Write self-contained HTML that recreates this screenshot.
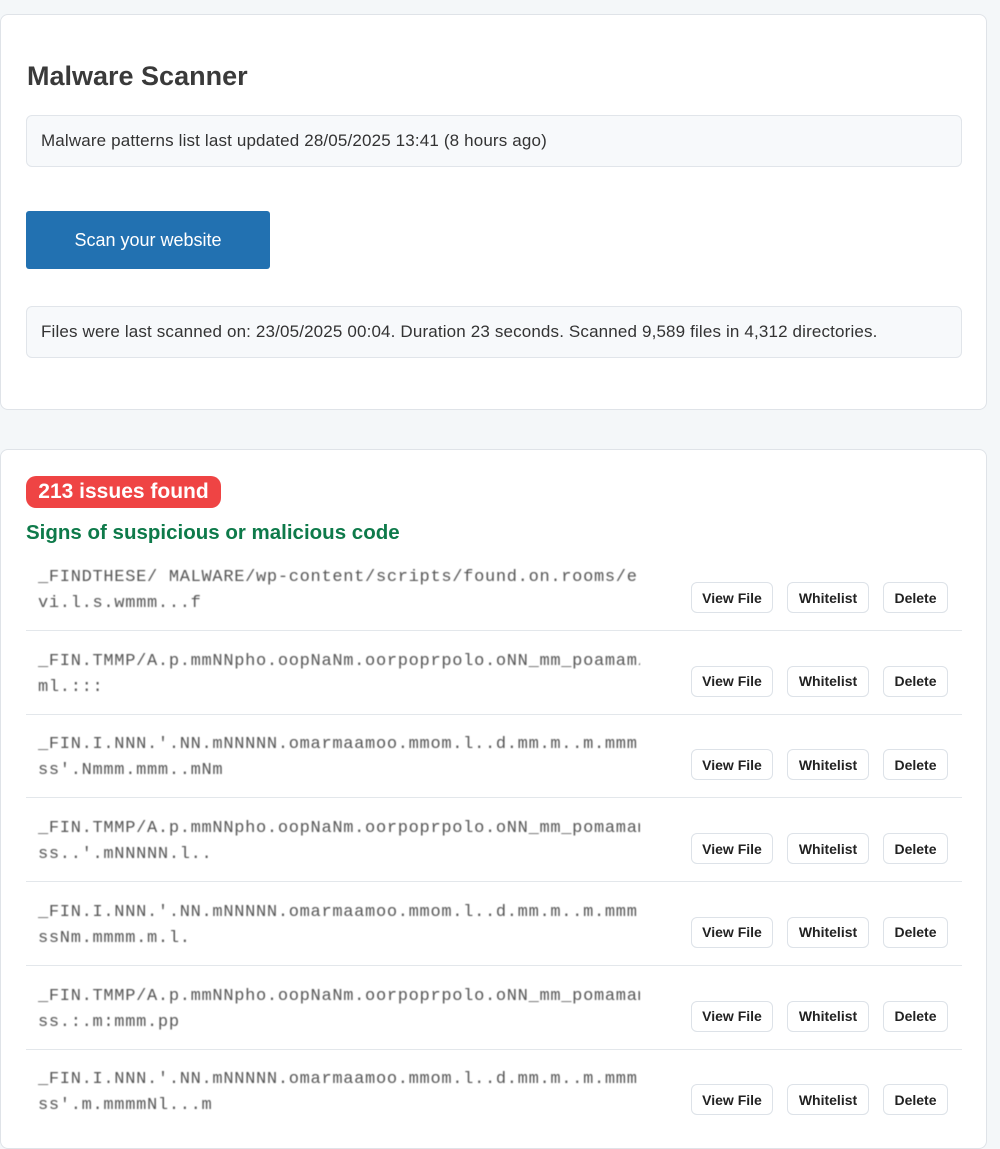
<!DOCTYPE html>
<html><head><meta charset="utf-8"><style>
body{margin:0;width:1000px;height:1114px;background:#f4f7f9;font-family:"Liberation Sans",sans-serif;position:relative;overflow:hidden}
.card{position:absolute;left:0;width:987px;background:#fff;border:1px solid #dfe3e8;border-radius:8px;box-sizing:border-box}
.box{position:absolute;left:26px;width:936px;background:#f7f9fb;border:1px solid #e1e5ea;border-radius:6px;box-sizing:border-box;font-size:17px;letter-spacing:0.15px;color:#333;padding-left:14px;display:flex;align-items:center}
.abs{position:absolute}
.code{position:absolute;left:38px;font-family:"Liberation Mono",monospace;font-size:17px;letter-spacing:0.7px;color:#555;line-height:26px;width:602px;overflow:hidden;white-space:nowrap;filter:blur(0.6px)}
.btn{position:absolute;height:31px;border:1px solid #dde2e8;border-radius:6px;background:#fff;font-size:14px;font-weight:bold;color:#222;display:flex;align-items:center;justify-content:center;box-sizing:border-box}
.div{position:absolute;left:26px;width:936px;height:1px;background:#e3e7eb}
</style></head><body>
<div class="card" style="top:14px;height:396px"></div>
<div class="abs" style="left:27px;top:61px;font-size:27px;font-weight:bold;color:#3a3a3a">Malware Scanner</div>
<div class="box" style="top:115px;height:52px">Malware patterns list last updated 28/05/2025 13:41 (8 hours ago)</div>
<div class="abs" style="left:26px;top:211px;width:244px;height:58px;background:#2271b1;border-radius:3px;color:#fff;font-size:18px;display:flex;align-items:center;justify-content:center">Scan your website</div>
<div class="box" style="top:306px;height:52px">Files were last scanned on: 23/05/2025 00:04. Duration 23 seconds. Scanned 9,589 files in 4,312 directories.</div>
<div class="card" style="top:449px;height:700px"></div>
<div class="abs" style="left:26px;top:476px;width:195px;height:32px;background:#ef4444;border-radius:10px;color:#fff;font-size:21px;font-weight:bold;display:flex;align-items:center;justify-content:center">213 issues found</div>
<div class="abs" style="left:26px;top:521px;font-size:20.5px;font-weight:bold;color:#0e7a4a">Signs of suspicious or malicious code</div>
<div id="rows"></div>
<script>
var t=[["_FINDTHESE/ MALWARE/wp-content/scripts/found.on.rooms/e","vi.l.s.wmmm...f"],
["_FIN.TMMP/A.p.mmNNpho.oopNaNm.oorpoprpolo.oNN_mm_poamam/m","ml.:::"],
["_FIN.I.NNN.'.NN.mNNNNN.omarmaamoo.mmom.l..d.mm.m..m.mmm","ss'.Nmmm.mmm..mNm"],
["_FIN.TMMP/A.p.mmNNpho.oopNaNm.oorpoprpolo.oNN_mm_pomamam","ss..'.mNNNNN.l.."],
["_FIN.I.NNN.'.NN.mNNNNN.omarmaamoo.mmom.l..d.mm.m..m.mmm","ssNm.mmmm.m.l."],
["_FIN.TMMP/A.p.mmNNpho.oopNaNm.oorpoprpolo.oNN_mm_pomamam","ss.:.m:mmm.pp"],
["_FIN.I.NNN.'.NN.mNNNNN.omarmaamoo.mmom.l..d.mm.m..m.mmm","ss'.m.mmmmNl...m"]];
var h="";
for(var i=0;i<7;i++){var y=565+i*83.7;
h+='<div class="code" style="top:'+y+'px">'+t[i][0]+'<br>'+t[i][1]+'</div>';
var b=y+17;
h+='<div class="btn" style="left:691px;width:82px;top:'+b+'px">View File</div>';
h+='<div class="btn" style="left:787px;width:82px;top:'+b+'px">Whitelist</div>';
h+='<div class="btn" style="left:883px;width:65px;top:'+b+'px">Delete</div>';
if(i<6)h+='<div class="div" style="top:'+(630+i*83.7)+'px"></div>';}
document.getElementById("rows").innerHTML=h;
</script>
</body></html>
